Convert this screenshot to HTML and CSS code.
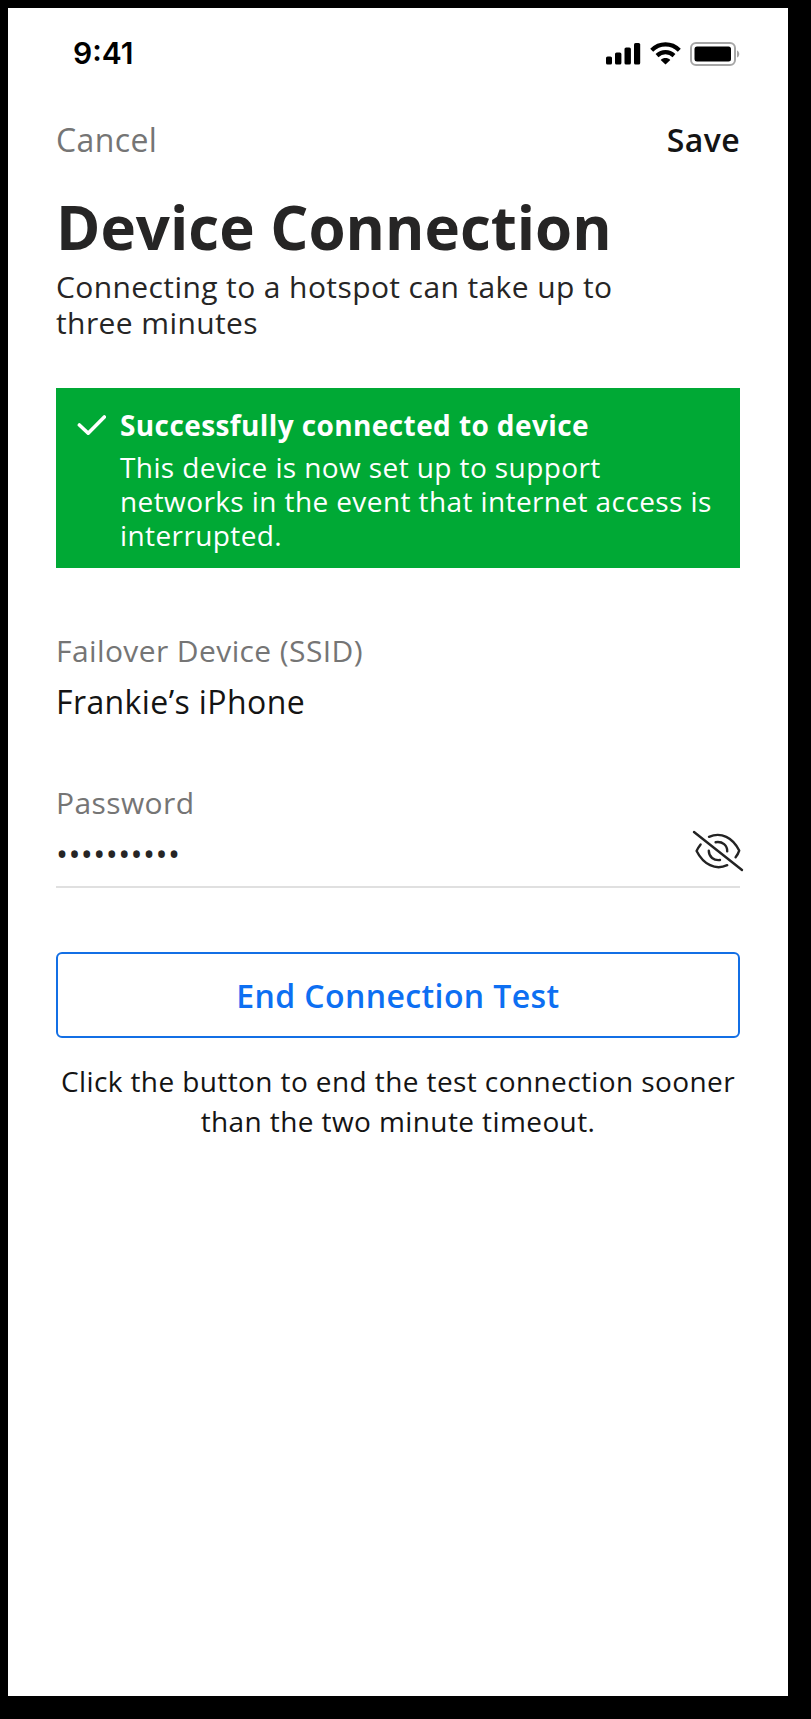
FILE: index.html
```html
<!DOCTYPE html>
<html lang="en">

<head>
    <meta charset="UTF-8">
    <meta name="viewport" content="width=device-width, initial-scale=1.0">
    <title>Device Connection</title>

    <link rel="stylesheet" href="styles.css">
</head>

<body>

    <div class="screen">
        <div class="status-bar">
            <span class="time">9:41</span>
            <div class="status-icons">
                <svg class="signal" width="36" height="24" viewBox="0 0 36 24">
                    <rect x="0" y="14.5" width="6" height="8" rx="1.6" />
                    <rect x="9" y="10.5" width="6.4" height="12" rx="1.6" />
                    <rect x="18.5" y="5.500" width="6.4" height="17" rx="1.6" />
                    <rect x="28" y="1" width="6.2" height="21.5" rx="1.6" />
                </svg>
                <svg class="wifi" width="32" height="24" viewBox="0 0 32 24">
                    <path d="M1.700 8.200C9.500 .4 21.500 .4 29.300 8.200M7 13.600c5-4.600 12-4.600 17 0" fill="none" stroke="#000" stroke-width="4.200" />
                    <path d="M15.500 22.500l-4.800-4.600c2.600-2.600 7-2.600 9.600 0z" />
                </svg>
                <svg class="battery" width="50" height="24" viewBox="0 0 50 24">
                    <rect x="1" y="1" width="44" height="22" rx="5" fill="none" stroke="#a6a6a6" stroke-width="2" />
                    <rect x="4.5" y="4.5" width="36.5" height="15" rx="2.5" />
                    <path d="M47 8.500c3 1 3 6 0 7z" fill="#a6a6a6" />
                </svg>
            </div>
        </div>

        <nav class="nav">
            <a class="cancel">Cancel</a>
            <a class="save">Save</a>
        </nav>

        <main>
            <h1>Device Connection</h1>
            <p class="subtitle">Connecting to a hotspot can take up to<br>three minutes</p>

            <section class="alert">
                <svg class="check" width="30" height="22" viewBox="0 0 30 22">
                    <path d="M3.400 11l8.800 8.200L28.300 3" fill="none" stroke="#fff" stroke-width="3.600" stroke-linecap="round" stroke-linejoin="round" />
                </svg>
                <div>
                    <h2>Successfully connected to device</h2>
                    <p>This device is now set up to support<br>networks in the event that internet access is<br>interrupted.</p>
                </div>
            </section>

            <div class="field">
                <span class="label">Failover Device (SSID)</span>
                <span class="value">Frankie’s iPhone</span>
            </div>

            <div class="field password">
                <span class="label">Password</span>
                <div class="password-row">
                    <span class="dots">••••••••••</span>
                    <svg class="eye" width="52" height="42" viewBox="0 0 52 42">
                        <g fill="none" stroke="#232323" stroke-width="2.4" stroke-linecap="round" stroke-linejoin="round">
                            <path d="M2 2l48 38" />
                            <path d="M17 6.800C29 1.500 41 7.500 47.200 20.600c-.8 2.600-2 4.600-3.600 6.600" />
                            <path d="M8.600 14.400c-1.600 2-3 4-4 6.600C11.500 34.600 23.500 40.500 35.200 35.200" />
                            <path d="M23.600 12.200C30.500 11 35.500 15.500 35.200 21.400M16.800 20.800c0 6 5 10 11.200 9.200" />
                        </g>
                    </svg>
                </div>
            </div>

            <button type="button">End Connection Test</button>
            <p class="help">Click the button to end the test connection sooner<br>than the two minute timeout.</p>
        </main>
    </div>

</body>

</html>
```
FILE: styles.css
```css
body {
    margin: 0;
    padding: 8px;
    background-color: #000;
    font-family: "Open Sans", sans-serif;
    letter-spacing: 0.4px;
    color: #262525;
}

h1,
h2,
p {
    margin: 0;
}

.screen {
    box-sizing: border-box;
    width: 780px;
    height: 1688px;
    padding: 0 48px;
    background-color: #fff;
}

.status-bar {
    display: flex;
    justify-content: space-between;
    align-items: center;
    height: 90px;
    padding-left: 17px;
}

.time {
    font-family: Inter, sans-serif;
    font-size: 30px;
    font-weight: 600;
    letter-spacing: 0;
    color: #000;
}

.status-icons {
    display: flex;
    align-items: center;
    padding-top: 2px;
}

.wifi {
    margin-left: 8px;
}

.battery {
    margin-left: 8px;
}

.nav {
    display: flex;
    justify-content: space-between;
    padding-top: 20px;
    font-size: 32px;
    line-height: 44px;
}

.cancel {
    color: #757575;
}

.save {
    font-weight: 600;
    color: #141414;
}

h1 {
    margin-top: 29px;
    font-size: 60px;
    font-weight: 700;
    line-height: 72px;
    letter-spacing: 0;
}

.subtitle {
    margin-top: 6px;
    font-size: 30px;
    line-height: 36px;
}

.alert {
    display: flex;
    box-sizing: border-box;
    height: 180px;
    margin-top: 47px;
    padding: 20px 0 16px 20px;
    background-color: #00a935;
    color: #fff;
    font-size: 28px;
    line-height: 34px;
}

.check {
    flex: none;
    margin: 6px 14px 0 0;
}

.alert h2 {
    margin-bottom: 8px;
    font-size: 28px;
    font-weight: 700;
}

.field {
    display: flex;
    flex-direction: column;
    margin-top: 65px;
}

.label {
    font-size: 30px;
    line-height: 36px;
    color: #757575;
}

.value {
    margin-top: 13px;
    font-size: 32px;
    line-height: 40px;
    color: #141414;
}

.password {
    margin-top: 63px;
}

.password-row {
    display: flex;
    justify-content: space-between;
    height: 56px;
    padding-top: 9px;
    border-bottom: 2px solid #e0e0e0;
}

.dots {
    font-size: 32px;
    line-height: 48px;
}

.eye {
    margin-right: -4px;
}

button {
    display: block;
    box-sizing: border-box;
    width: 100%;
    height: 86px;
    margin-top: 64px;
    padding: 0;
    border: 2px solid #136fe5;
    border-radius: 6px;
    background-color: #fff;
    color: #0d6ff2;
    font-family: inherit;
    font-size: 32px;
    font-weight: 600;
    letter-spacing: inherit;
}

.help {
    margin-top: 23px;
    font-size: 28px;
    line-height: 40px;
    text-align: center;
    color: #141414;
}
```
